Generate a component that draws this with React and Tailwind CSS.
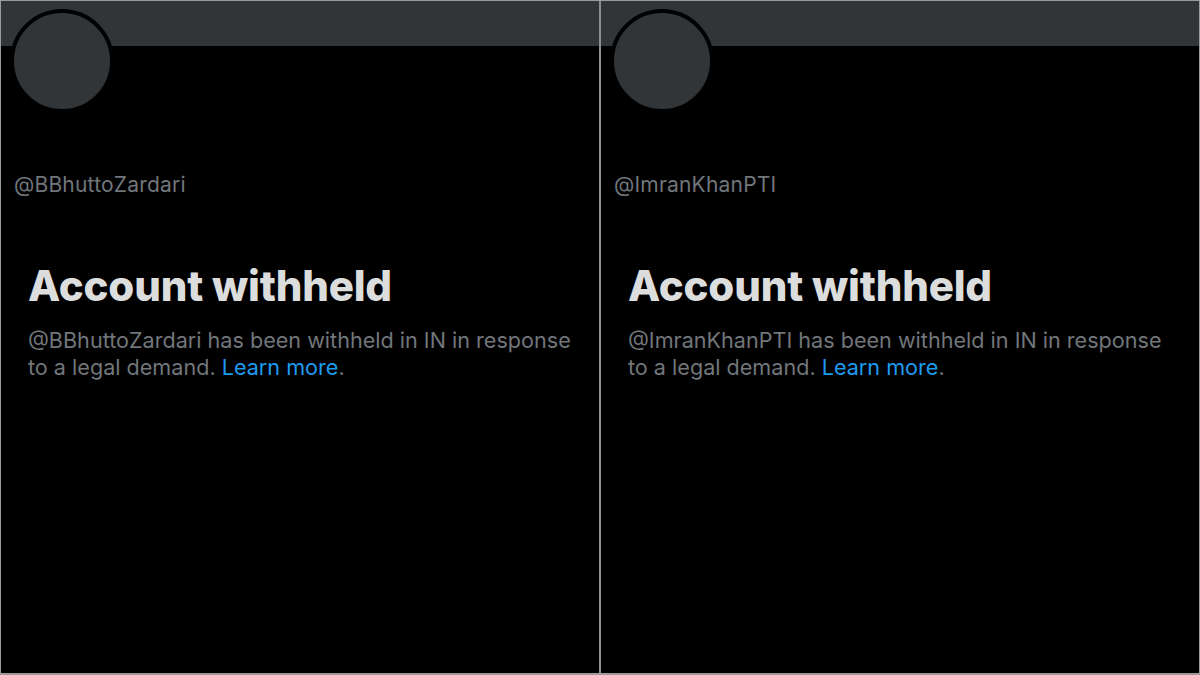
const accounts = ['BBhuttoZardari', 'ImranKhanPTI'];

function Panel({ handle }) {
  return (
    <div className="w-[598px] h-full bg-black flex flex-col">
      <div className="h-[45px] bg-[#323538]" />
      <div className="ml-[9px] -mt-[37px] w-[104px] h-[104px] rounded-full border-4 border-black bg-[#323538]" />
      <div className="mt-[59px] ml-[13px] text-[21px] leading-[26px] text-[#71767b] tracking-[0.2px]">@{handle}</div>
      <div className="mt-[63px] ml-[27px]">
        <h1 className="text-[42px] leading-[50px] font-extrabold text-[#dcdddd] tracking-[-0.2px]">Account withheld</h1>
        <p className="mt-[16px] text-[21.6px] leading-[27px] text-[#71767b] max-w-[552px]">
          @{handle} has been withheld in IN in response to a legal demand.{' '}
          <span className="text-[#1d9bf0]">Learn more</span>.
        </p>
      </div>
    </div>
  );
}

export default function App() {
  return (
    <div
      className="w-[1200px] h-[675px] bg-[#8f8f8f] border-t border-l border-r border-b-2 border-[#9a9a9a] flex gap-[2px] overflow-hidden"
      style={{ fontFamily: 'Inter, "Noto Sans", sans-serif' }}
    >
      {accounts.map((a) => (
        <Panel key={a} handle={a} />
      ))}
    </div>
  );
}
